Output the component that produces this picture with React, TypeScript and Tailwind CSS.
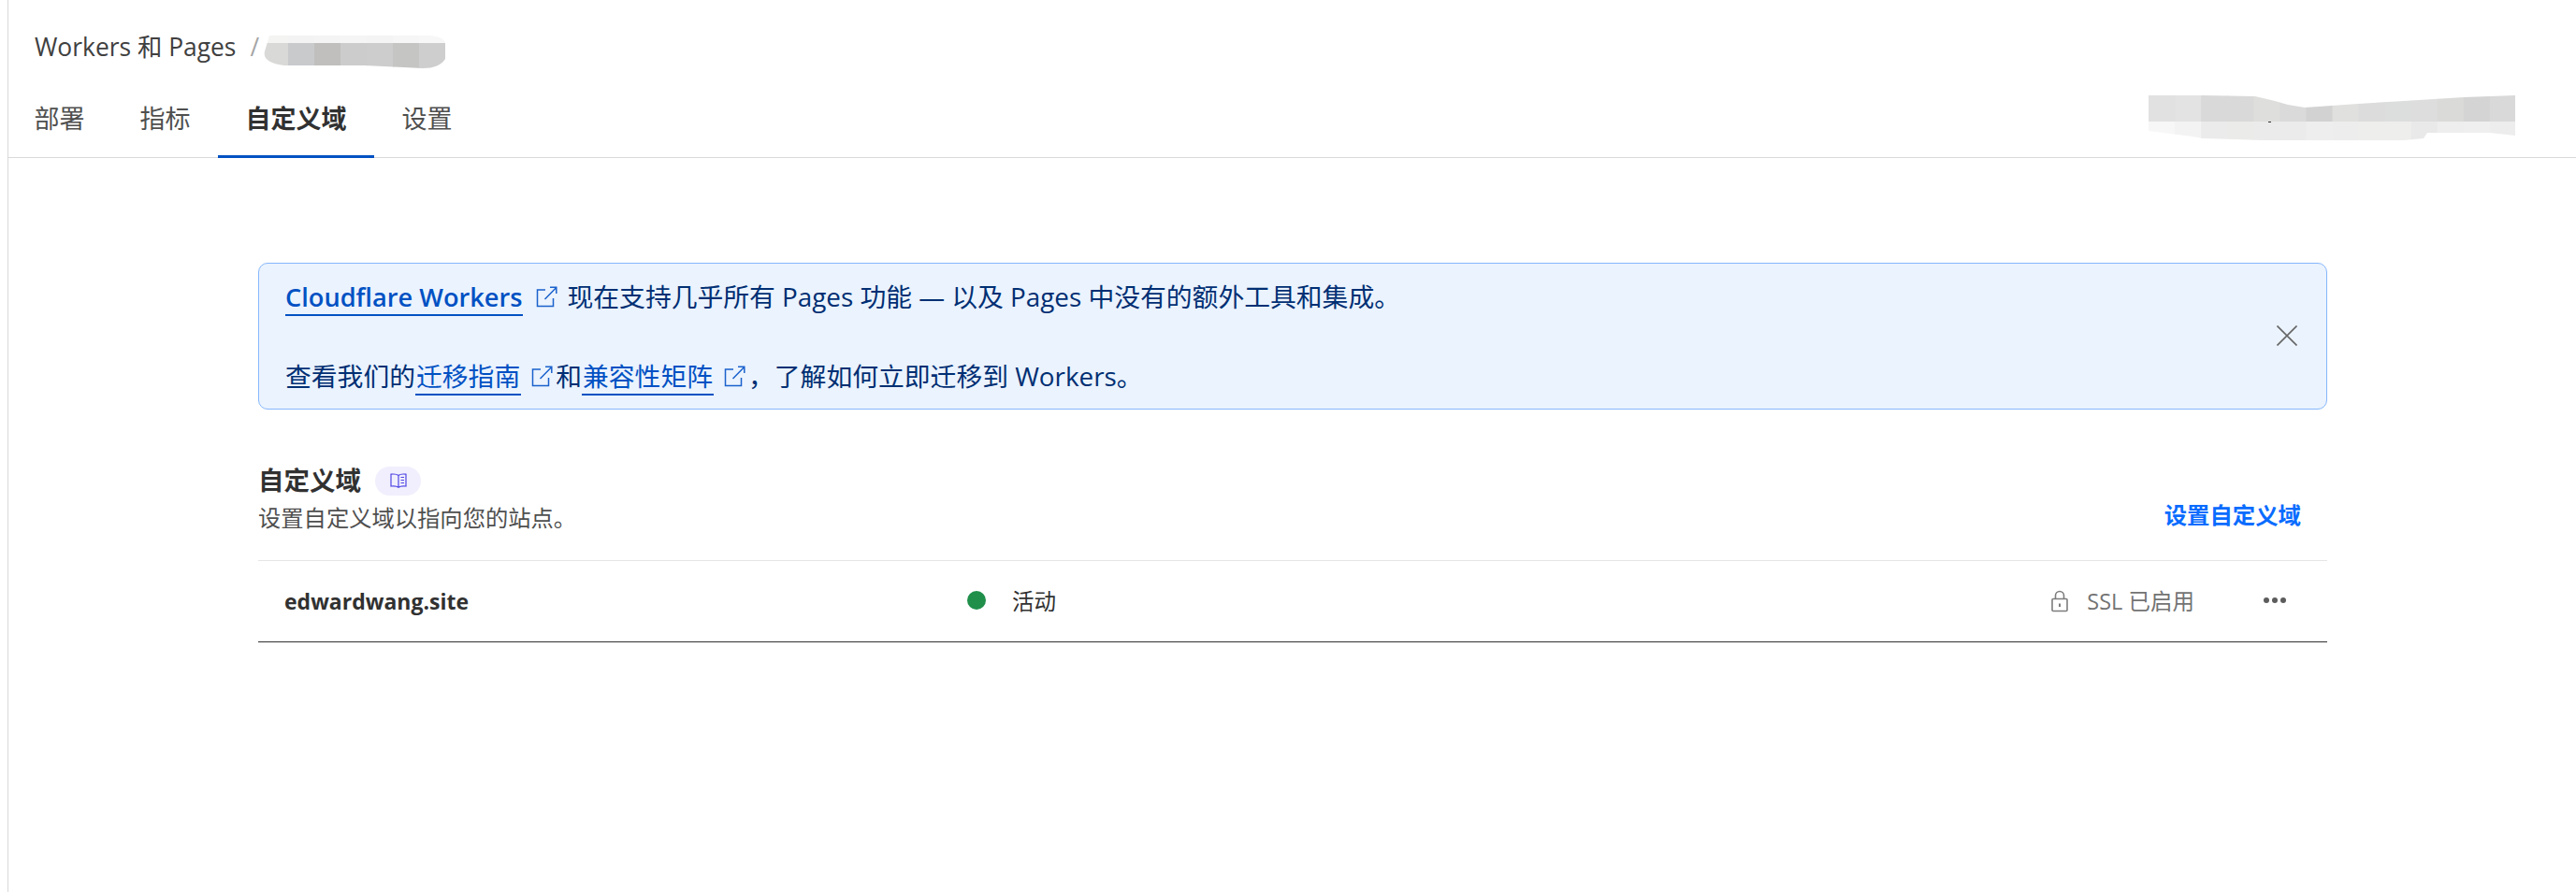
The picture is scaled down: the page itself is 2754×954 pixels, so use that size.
import React from "react";

const fontStack = "font-['Open_Sans','Noto_Sans_CJK_SC',sans-serif]";

const tabs = [
  { label: "部署", active: false },
  { label: "指标", active: false },
  { label: "自定义域", active: true },
  { label: "设置", active: false },
];

// redacted areas in the screenshot, blocks of grey
const Mosaic: React.FC<{
  width: number;
  height: number;
  outline: string;
  rows: { y: number; h: number; colors: string[] }[];
  id: string;
  children?: React.ReactNode;
}> = ({ width, height, outline, rows, id, children }) => (
  <svg width={width} height={height} viewBox={`0 0 ${width} ${height}`}>
    <defs>
      <clipPath id={id}>
        <path d={outline} />
      </clipPath>
    </defs>
    <g clipPath={`url(#${id})`}>
      {rows.map((row) =>
        row.colors.map((color, i) => (
          <rect
            key={`${row.y}-${i}`}
            x={(i * width) / row.colors.length}
            y={row.y}
            width={width / row.colors.length + 1}
            height={row.h}
            fill={color}
          />
        ))
      )}
    </g>
    {children}
  </svg>
);

const ExternalIcon: React.FC<{ tight?: boolean }> = ({ tight }) => (
  <svg
    width="23"
    height="23"
    viewBox="0 0 23 23"
    fill="none"
    stroke="#1a62cc"
    strokeWidth="1.5"
    className={`inline-block align-[-1px] ${tight ? "ml-[11px] mr-[3px]" : "ml-[14px] mr-[11px]"}`}
  >
    <path d="M10 4H1.5V21.5H18.5V13" />
    <path d="M9.5 14L21.5 1.8M15 1.2H21.8V8" />
  </svg>
);

const Link: React.FC<{ children: React.ReactNode; bold?: boolean }> = ({ children, bold }) => (
  <span className={`border-b-[2px] border-[#0051c3] text-[#0051c3] ${bold ? "font-semibold text-[27.2px]" : "px-[1px]"}`}>
    {children}
  </span>
);

export default function App() {
  return (
    <div className={`min-h-screen ml-[8px] border-l-[1px] border-[#d9d9d9] bg-white ${fontStack}`}>
      <header className="h-[169px] flex flex-col justify-between border-b-[1px] border-[#d9d9d9]">
        <div className="flex items-start pl-[28px] pt-[32px] text-[26.4px] leading-[36px] text-[#404040]">
          <span>Workers 和 Pages</span>
          <span className="ml-[15px] text-[#a6a6a6]">/</span>
          <span className="ml-[3px] mt-[5px] flex">
            <Mosaic
              id="crumb"
              width={196}
              height={36}
              outline="M8 1H178Q196 2 196 10V26Q190 36 172 36L110 33H24Q0 30 3 18Z"
              rows={[
                { y: 0, h: 9, colors: ["#f4f4f3", "#f3f3f3", "#f4f4f4", "#f5f5f5", "#f4f4f4", "#f6f6f6", "#f7f7f7"] },
                { y: 9, h: 27, colors: ["#d9d9d7", "#c9cacc", "#c0bfbd", "#cbcccb", "#cccdcc", "#c5c5c4", "#cdcecd"] },
              ]}
            />
          </span>
        </div>
        <div className="flex items-end justify-between">
          <nav className="flex h-[72px] -ml-[2px] items-stretch text-[27px]">
            {tabs.map((tab) => (
              <div
                key={tab.label}
                className={`px-[29.5px] pb-[8px] flex items-center border-b-[3px] -mb-[1px] ${
                  tab.active ? "border-[#0051c3] text-[#313131] font-bold" : "border-transparent text-[#4f4f4f]"
                }`}
              >
                {tab.label}
              </div>
            ))}
          </nav>
          <div className="mr-[64px] mb-[18px] flex">
            <Mosaic
              id="top-right"
              width={393}
              height={48}
              outline="M0 0H58L114 1L135 6L149 10L167 13L196 11L224 9L273 6L305 4L337 2L392 0V43L365 40H298L294 46L273 48H121L93 47L58 46L47 44L0 38Z"
              rows={[
                { y: 0, h: 28, colors: ["#e1e1e1", "#e3e3e3", "#d9d9d9", "#d9d9d9", "#dededc", "#dadada", "#d2d2d2", "#e0e0de", "#dcdcdc", "#dcdede", "#dddddd", "#dadad8", "#d4d4d4", "#d9d9d9"] },
                { y: 28, h: 20, colors: ["#f7f7f7", "#f3f3f3", "#ebebeb", "#ebebe9", "#ebebeb", "#ebebeb", "#eeeeee", "#ededed", "#eeeeed", "#eeeeec", "#e9e9e9", "#eeeeee", "#efefef", "#ededed"] },
              ]}
            >
              <rect x="128" y="28" width="3" height="1" fill="#333333" />
            </Mosaic>
          </div>
        </div>
      </header>

      <main className="w-[2212px] ml-[267px] pt-[112px]">
        <section className="h-[157px] rounded-[10px] border-[1px] border-[#86b7fc] bg-[#ebf3fe] pl-[28px] pr-[31px] flex items-center justify-between text-[27.8px] text-[#002f73]">
          <div className="leading-[42px]">
            <p className="whitespace-nowrap">
              <Link bold>Cloudflare Workers</Link>
              <ExternalIcon />
              现在支持几乎所有 Pages 功能 — 以及 Pages 中没有的额外工具和集成。
            </p>
            <p className="mt-[42px] whitespace-nowrap">
              查看我们的<Link>迁移指南</Link>
              <ExternalIcon tight />和<Link>兼容性矩阵</Link>
              <ExternalIcon tight />，了解如何立即迁移到 Workers。
            </p>
          </div>
          <svg width="22" height="22" viewBox="0 0 22 22" fill="none" stroke="#666666" strokeWidth="1.6" className="-mt-[2px]">
            <path d="M0.5 0.5L21.5 21.5M21.5 0.5L0.5 21.5" />
          </svg>
        </section>

        <section className="mt-[60px]">
          <div className="flex items-end justify-between pb-[28px] border-b-[1px] border-[#e5e5e5]">
            <div>
              <div className="flex items-center gap-[15px]">
                <h2 className="text-[27.5px] leading-[32px] font-bold text-[#313131]">自定义域</h2>
                <span className="w-[49px] h-[31px] rounded-full bg-[#f1effd] flex items-center justify-center">
                  <svg width="18" height="18" viewBox="0 0 18 18" fill="none" stroke="#5046e5" strokeWidth="1.2">
                    <path d="M9 3.5C7.5 2.2 4 1.8 1 2.2V15C4 14.6 7.5 15 9 16.3C10.5 15 14 14.6 17 15V2.2C14 1.8 10.5 2.2 9 3.5ZM9 3.5V16.3" />
                    <path d="M11.5 5.5H15M11.5 8.5H15M11.5 11.5H15" />
                  </svg>
                </span>
              </div>
              <p className="text-[24.3px] leading-[34px] mt-[7px] text-[#4f4f4f]">设置自定义域以指向您的站点。</p>
            </div>
            <a className="mr-[28px] mb-[4px] text-[24.4px] leading-[32px] font-bold text-[#0a6cff]">设置自定义域</a>
          </div>
          <div className="h-[87px] flex items-center border-b-[1px] border-[#313131] text-[23px] text-[#313131]">
            <div className="w-[758px] pl-[28px] font-bold">edwardwang.site</div>
            <div className="flex items-center flex-1">
              <span className="w-[20px] h-[20px] rounded-full bg-[#1f8f4a] -mt-[2px]"></span>
              <span className="ml-[28px] text-[23.5px] mt-[1px]">活动</span>
            </div>
            <div className="flex items-center text-[23.5px] text-[#737373]">
              <svg width="18" height="24" viewBox="0 0 18 24" fill="none" stroke="#7d7d7d" strokeWidth="1.6">
                <rect x="1" y="9.5" width="16" height="13" rx="1" />
                <path d="M4.5 9.5V6A4.5 4.5 0 0 1 13.5 6V9.5" />
                <path d="M9 14.5V18" strokeWidth="2" />
              </svg>
              <span className="ml-[20px] mt-[1px]">SSL 已启用</span>
            </div>
            <div className="ml-[74px] mr-[44px] flex gap-[3px] -mt-[2px]">
              <span className="w-[6px] h-[6px] rounded-full bg-[#5c5c5c]"></span>
              <span className="w-[6px] h-[6px] rounded-full bg-[#5c5c5c]"></span>
              <span className="w-[6px] h-[6px] rounded-full bg-[#5c5c5c]"></span>
            </div>
          </div>
        </section>
      </main>
    </div>
  );
}
